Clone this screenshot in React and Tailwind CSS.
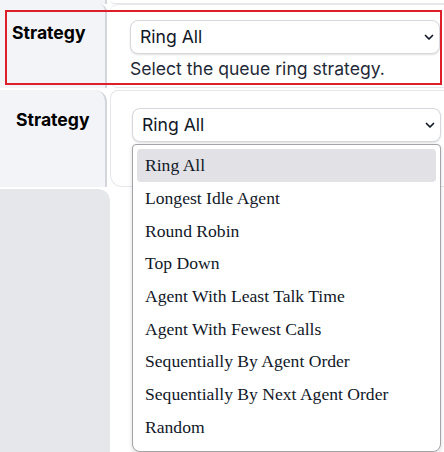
import React from "react";

const options = [
  "Ring All",
  "Longest Idle Agent",
  "Round Robin",
  "Top Down",
  "Agent With Least Talk Time",
  "Agent With Fewest Calls",
  "Sequentially By Agent Order",
  "Sequentially By Next Agent Order",
  "Random",
];

function Chevron() {
  return (
    <svg width="12" height="12" viewBox="0 0 12 12" fill="none">
      <path d="M2.5 4.5 L6 8 L9.5 4.5" stroke="#111827" strokeWidth="1.7" strokeLinecap="round" strokeLinejoin="round" />
    </svg>
  );
}

function SelectBox() {
  return (
    <div className="flex h-[34px] items-center justify-between rounded-lg border border-[#d6d8de] bg-white pl-[9px] pr-[4px] shadow-[0_1px_2px_rgba(0,0,0,0.12)]">
      <span className="text-[17.6px] text-[#111827]">Ring All</span>
      <Chevron />
    </div>
  );
}

export default function App() {
  return (
    <div className="w-[444px] h-[452px] overflow-hidden bg-white" style={{ fontFamily: "Inter, 'Liberation Sans', sans-serif" }}>
      {/* tail of the row above */}
      <div className="flex h-[4px]">
        <div className="w-[107px] bg-[#f3f4f8] border-r-2 border-[#d4d6dc]" />
        <div className="flex-1 border-b border-[#e5e7eb] rounded-bl-lg ml-[3px]" />
      </div>

      {/* row 1 */}
      <div className="relative flex h-[84px]">
        <div className="w-[107px] shrink-0 rounded-tr-lg bg-[#f3f4f8] border-r-2 border-[#d4d6dc] pl-[12px] pt-[16px]">
          <span className="text-[17.6px] font-bold text-black">Strategy</span>
        </div>
        <div className="flex-1 ml-[3px] rounded-tl-lg rounded-bl-lg border-t border-b border-[#e5e7eb] pl-[20px] pr-[4px] pt-[15px]">
          <SelectBox />
          <div className="mt-[3px] text-[17.6px] leading-[24px] text-[#1f2937]">Select the queue ring strategy.</div>
        </div>
        <div className="absolute left-[5px] top-[6px] w-[437px] h-[75px] border-2 border-[#dc1f2a]" />
      </div>

      {/* row 2 */}
      <div className="flex h-[97px] mt-[2px]">
        <div className="w-[107px] shrink-0 rounded-tr-xl bg-[#f3f4f8] border-r-2 border-[#d4d6dc] pl-[16px] pt-[17px]">
          <span className="text-[17.6px] font-bold text-black">Strategy</span>
        </div>
        <div className="flex-1 ml-[3px] rounded-tl-lg rounded-bl-xl border-t border-b border-l border-[#e5e7eb] pl-[21px] pr-[3px] pt-[17px]">
          <SelectBox />
        </div>
      </div>

      {/* row 3 with open dropdown over it */}
      <div className="relative flex flex-1 h-[270px] mt-[2px]">
        <div className="w-[110px] shrink-0 rounded-tr-xl bg-[#e5e7eb]" />
        <div className="flex-1" />
        <div
          className="absolute left-[132px] top-[-45px] w-[309px] rounded-b-lg rounded-t-sm border border-[#a3a3a8] bg-white px-[4px] pt-[4px] pb-[8px] shadow-[0_2px_4px_rgba(0,0,0,0.15)]"
          style={{ fontFamily: "'Liberation Serif', 'Times New Roman', serif" }}
        >
          {options.map((o, i) => (
            <div
              key={o}
              className={`h-[32.7px] flex items-center pl-[8px] rounded text-[17.6px] text-[#111827] ${i === 0 ? "bg-[#e1e1e6]" : ""}`}
            >
              {o}
            </div>
          ))}
        </div>
      </div>
    </div>
  );
}
